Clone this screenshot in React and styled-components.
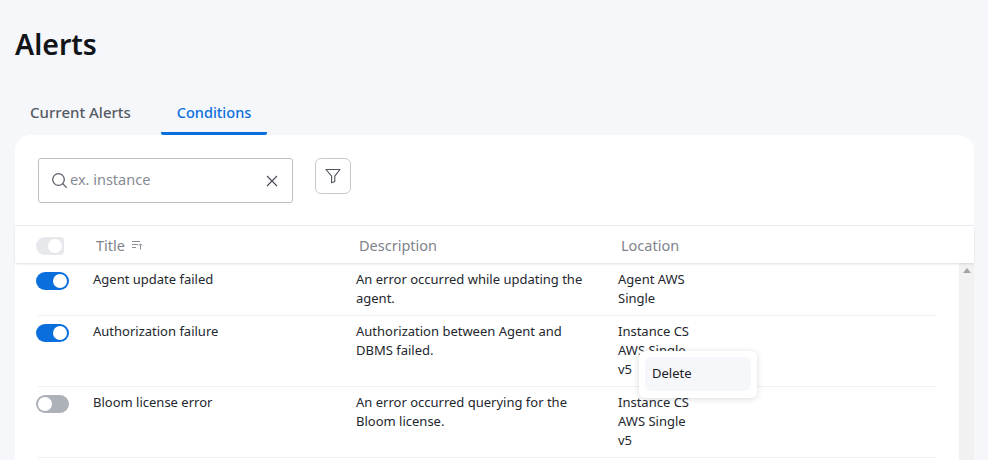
import styled, { createGlobalStyle } from 'styled-components';

const rows = [
  { on: true, title: 'Agent update failed', desc: 'An error occurred while updating the agent.', loc: 'Agent AWS Single' },
  { on: true, title: 'Authorization failure', desc: 'Authorization between Agent and DBMS failed.', loc: 'Instance CS AWS Single v5', menu: true },
  { on: false, title: 'Bloom license error', desc: 'An error occurred querying for the Bloom license.', loc: 'Instance CS AWS Single v5' },
];

const GlobalStyle = createGlobalStyle`
  html, body {
    margin: 0;
    height: 460px;
    overflow: hidden;
    background: #f5f7fb;
    font-family: 'Noto Sans', 'Open Sans', sans-serif;
  }
`;

const Page = styled.div`
  height: 460px;
  padding: 0 14px 0 15px;
  display: flex;
  flex-direction: column;
  overflow: hidden;
`;

const Heading = styled.h1`
  margin: 26px 0 0;
  height: 36px;
  line-height: 36px;
  font-size: 28.5px;
  font-weight: 600;
  color: #111418;
`;

const Tabs = styled.div`
  display: flex;
  margin-top: 34px;
  height: 39px;
`;

const Tab = styled.div`
  width: ${props => props.$width}px;
  margin-right: ${props => props.$gap || 0}px;
  height: 39px;
  box-sizing: border-box;
  padding-top: 6px;
  text-align: center;
  font-size: ${props => (props.$active ? '14.5px' : '15px')};
  line-height: 20px;
  font-weight: 500;
  color: ${props => (props.$active ? '#0a6fdc' : '#555b65')};
  border-bottom: 3px solid ${props => (props.$active ? '#0a6fdc' : 'transparent')};
  border-radius: 0 0 2px 2px;
`;

const Card = styled.div`
  flex: 1;
  background: #fff;
  border-radius: 16px 16px 0 0;
  display: flex;
  flex-direction: column;
  min-height: 0;
`;

const Toolbar = styled.div`
  height: 91px;
  flex-shrink: 0;
  box-sizing: border-box;
  padding: 23px 23px 0;
  display: flex;
  align-items: flex-start;
  gap: 22px;
  border-bottom: 1px solid #ebedf1;
`;

const SearchBox = styled.div`
  width: 255px;
  height: 45px;
  box-sizing: border-box;
  border: 1px solid #bcbfc6;
  border-radius: 3px;
  display: flex;
  align-items: center;
  padding: 0 14px 0 12px;
  gap: 2px;
`;

const SearchText = styled.span`
  flex: 1;
  font-size: 14.5px;
  padding-bottom: 4px;
  color: #868b94;
`;

const FilterButton = styled.div`
  width: 36px;
  height: 36px;
  box-sizing: border-box;
  border: 1px solid #c6c9cf;
  border-radius: 6px;
  display: flex;
  align-items: center;
  justify-content: center;
`;

const HeaderRow = styled.div`
  height: 37px;
  flex-shrink: 0;
  display: grid;
  grid-template-columns: 58px 263px 262px 1fr;
  align-items: center;
  padding-left: 23px;
  font-size: 14.5px;
  color: #7f838b;
  box-shadow: 0 1px 2px rgba(0, 0, 0, 0.12);
  position: relative;
  z-index: 1;
`;

const HeaderCell = styled.div`
  display: flex;
  align-items: center;
  gap: 7px;
`;

const Body = styled.div`
  flex: 1;
  display: flex;
  min-height: 0;
  overflow: hidden;
`;

const List = styled.div`
  flex: 1;
  padding: 0 23px;
`;

const Row = styled.div`
  display: grid;
  grid-template-columns: 55px 263px 262px 1fr;
  height: ${props => props.$height}px;
  box-sizing: border-box;
  border-bottom: 1px solid #eef0f4;
  padding-top: ${props => props.$top}px;
  font-size: 13px;
  line-height: 19px;
  color: #23272e;
  position: relative;
`;

const Toggle = styled.div`
  width: ${props => props.$muted ? 28 : 33}px;
  height: 18px;
  margin: 2px 0 0 -2px;
  border-radius: ${props => props.$muted ? '9px 4px 4px 9px' : '9px'};
  background: ${props => props.$muted ? '#e6e8ec' : props.$on ? '#0a6fdc' : '#adb1b8'};
  position: relative;
  flex-shrink: 0;
`;

const Knob = styled.span`
  position: absolute;
  top: 2px;
  ${props => (props.$on ? 'right: 2px;' : 'left: 2px;')}
  width: 14px;
  height: 14px;
  border-radius: 50%;
  background: #fff;
`;

const Description = styled.div`
  width: 232px;
`;

const Location = styled.div`
  width: 80px;
`;

const Menu = styled.div`
  position: absolute;
  left: 601px;
  top: 35px;
  width: 118px;
  height: 47px;
  box-sizing: border-box;
  padding: 6px;
  background: #fff;
  border-radius: 6px;
  box-shadow: 0 1px 6px rgba(20, 30, 60, 0.16);
  z-index: 2;
`;

const MenuItem = styled.div`
  height: 34px;
  line-height: 32px;
  padding-left: 7px;
  background: #f5f7fb;
  border-radius: 6px;
  font-size: 13px;
  color: #1c2026;
`;

const Scrollbar = styled.div`
  width: 15px;
  background: #f1f1f1;
  display: flex;
  justify-content: center;
  padding-top: 5px;
  box-sizing: border-box;
`;

const ScrollArrow = styled.span`
  width: 0;
  height: 0;
  border-left: 4px solid transparent;
  border-right: 4px solid transparent;
  border-bottom: 5px solid #a3a3a3;
`;

const SearchIcon = () => (
  <svg width="17" height="17" viewBox="0 0 17 17" fill="none" stroke="#5f646d" strokeWidth="1.3">
    <circle cx="7.5" cy="7.5" r="5.8" />
    <path d="M11.8 11.8L15.4 15.4" strokeLinecap="round" />
  </svg>
);

const CloseIcon = () => (
  <svg width="12" height="12" viewBox="0 0 12 12" fill="none" stroke="#4a4f58" strokeWidth="1.2">
    <path d="M1 1L11 11M11 1L1 11" />
  </svg>
);

const FilterIcon = () => (
  <svg width="16" height="16" viewBox="0 0 16 16" fill="none" stroke="#4f545d" strokeWidth="1.1" strokeLinejoin="round">
    <path d="M1 1.5H15L9.8 8.2V13.6L6.6 14.8V8.2Z" />
  </svg>
);

const SortIcon = () => (
  <svg width="11" height="10" viewBox="0 0 11 10" fill="none" stroke="#8b8f96" strokeWidth="1">
    <path d="M0 1.5H8M0 4.5H6M0 7.5H4M8.5 9.5V4M6.8 5.6L8.5 3.8L10.2 5.6" />
  </svg>
);

const App = () => (
  <Page>
    <GlobalStyle />
    <Heading>Alerts</Heading>
    <Tabs>
      <Tab $width={131} $gap={15}>Current Alerts</Tab>
      <Tab $width={106} $active>Conditions</Tab>
    </Tabs>
    <Card>
      <Toolbar>
        <SearchBox>
          <SearchIcon />
          <SearchText>ex. instance</SearchText>
          <CloseIcon />
        </SearchBox>
        <FilterButton>
          <FilterIcon />
        </FilterButton>
      </Toolbar>
      <HeaderRow>
        <Toggle $muted>
          <Knob $on />
        </Toggle>
        <HeaderCell>
          Title <SortIcon />
        </HeaderCell>
        <HeaderCell>Description</HeaderCell>
        <HeaderCell>Location</HeaderCell>
      </HeaderRow>
      <Body>
        <List>
          {rows.map((row, i) => (
            <Row key={i} $height={i === 0 ? 53 : 71} $top={i === 0 ? 7 : 6}>
              <Toggle $on={row.on}>
                <Knob $on={row.on} />
              </Toggle>
              <div>{row.title}</div>
              <Description>{row.desc}</Description>
              <Location>{row.loc}</Location>
              {row.menu && (
                <Menu>
                  <MenuItem>Delete</MenuItem>
                </Menu>
              )}
            </Row>
          ))}
        </List>
        <Scrollbar>
          <ScrollArrow />
        </Scrollbar>
      </Body>
    </Card>
  </Page>
);

export default App;
